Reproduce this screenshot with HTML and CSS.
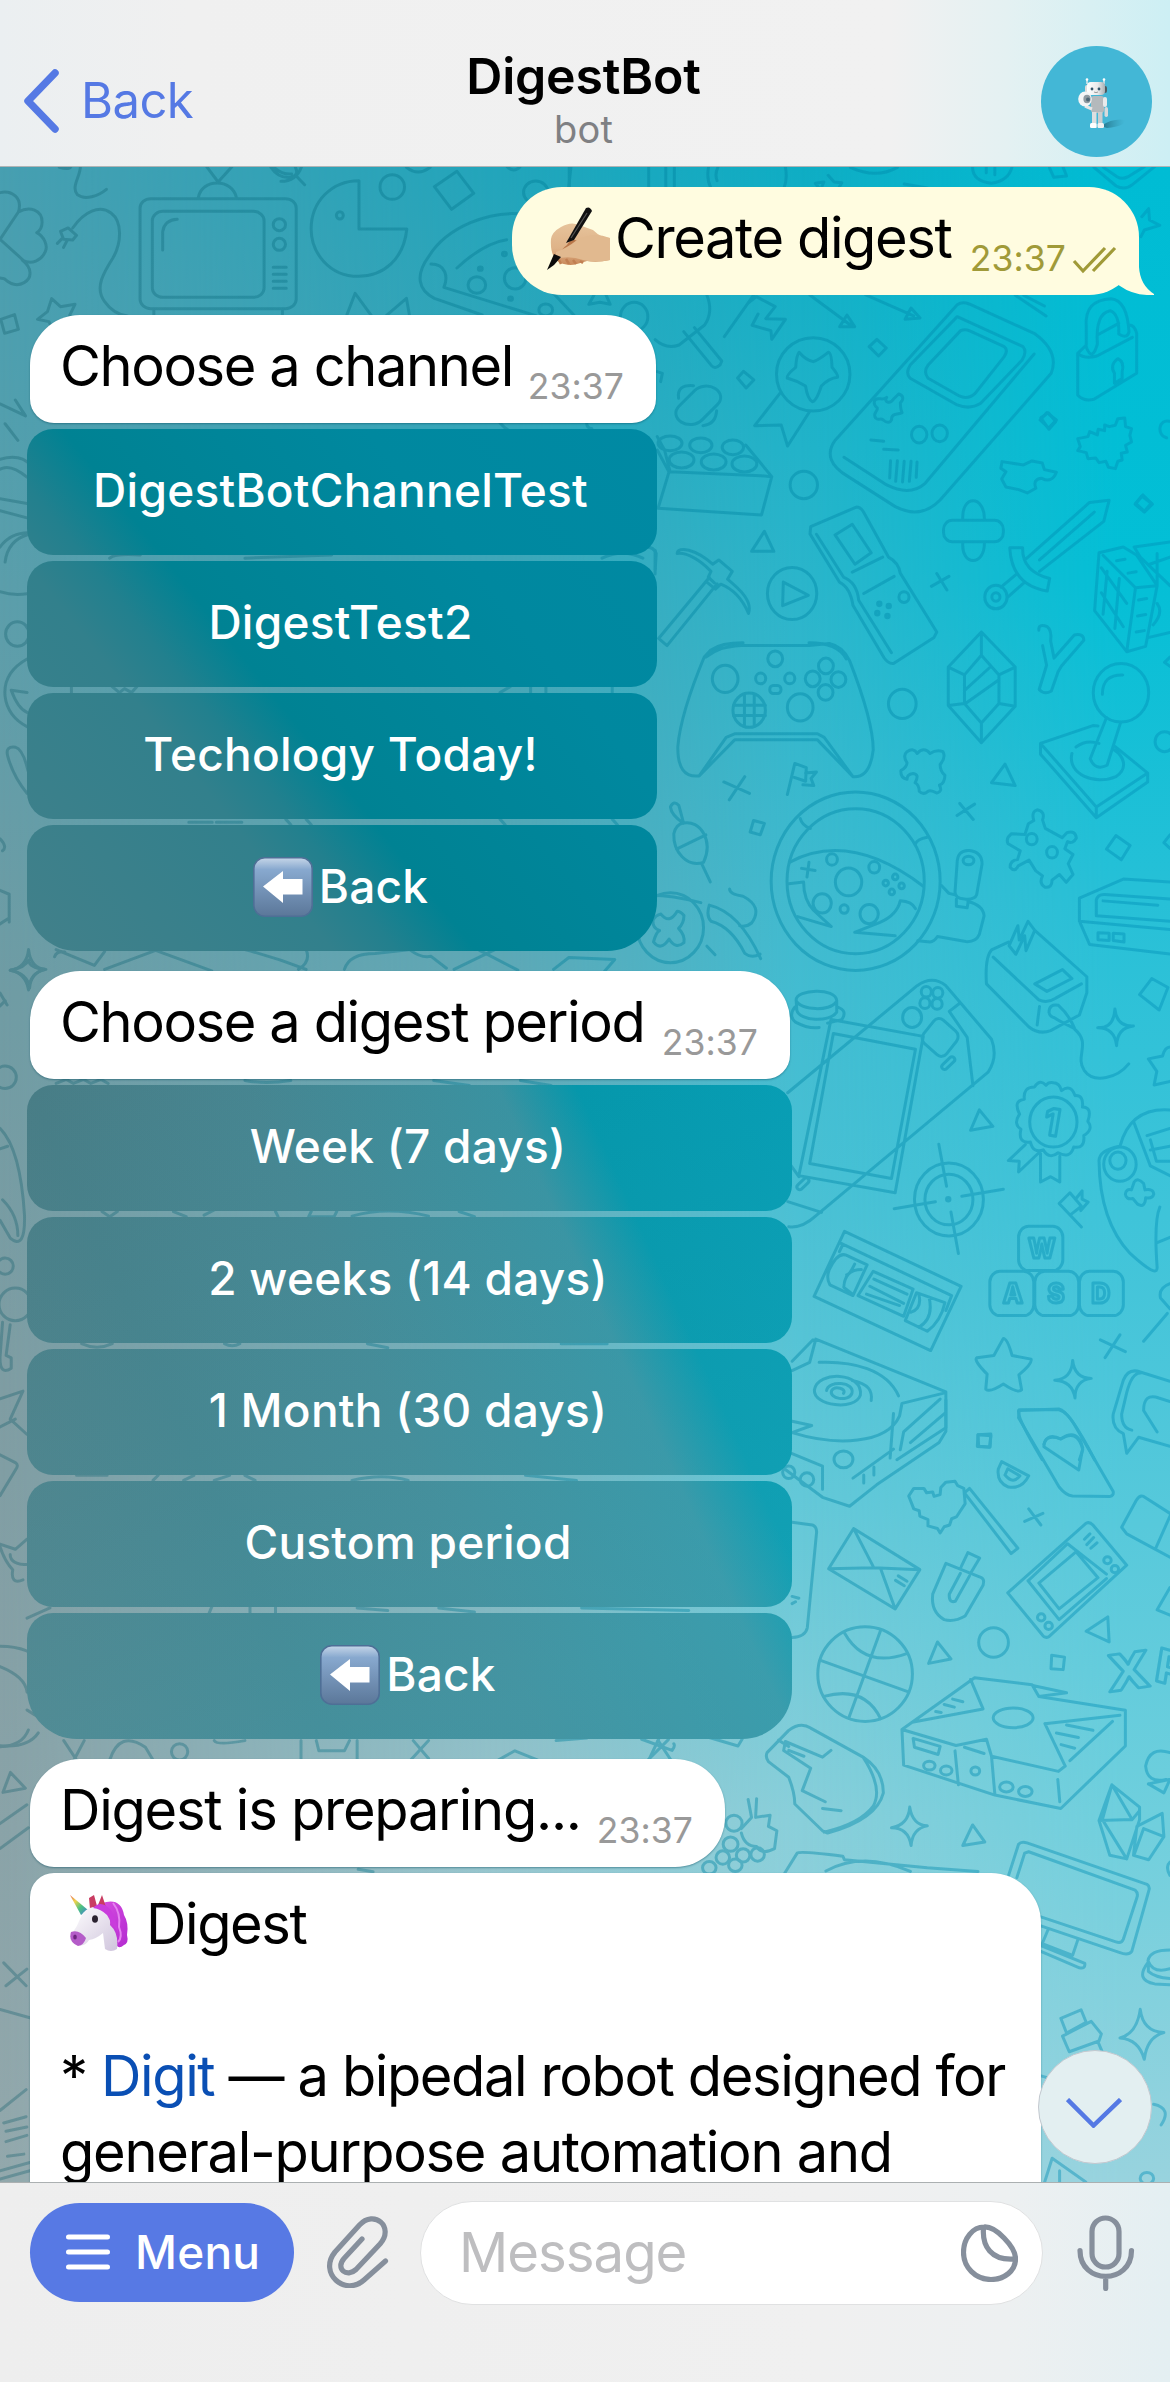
FILE: index.html
```html
<!DOCTYPE html>
<html lang="en">
<head>
<meta charset="utf-8">
<title>DigestBot</title>
<link rel="stylesheet" href="styles.css">
</head>
<body>
<div class="screen">
  <header class="header">
    <a class="back"><svg class="back-icon" width="38" height="68" viewBox="0 0 38 68"><path d="M33 6 6 34 33 62"/></svg><span>Back</span></a>
    <div class="heading"><h1 class="title">DigestBot</h1><p class="subtitle">bot</p></div>
    <svg class="avatar" width="111" height="111" viewBox="0 0 111 111">
      <defs>
        <linearGradient id="metal" x1="0" x2="1"><stop offset="0" stop-color="#fff"/><stop offset=".6" stop-color="#e8e9ea"/><stop offset="1" stop-color="#a9b0b4"/></linearGradient>
        <linearGradient id="cast" x1="0" x2="1"><stop offset="0" stop-color="#1c5f72" stop-opacity=".8"/><stop offset="1" stop-color="#2b8ca5" stop-opacity="0"/></linearGradient>
      </defs>
      <circle cx="55.500" cy="55.500" r="55.500" fill="#43b7d6"/>
      <path d="M60 80Q72 72 84 74 85 80 66 82Z" fill="url(#cast)"/>
      <path d="M46 38V34M63 38V34" stroke="#dfe8ea" stroke-width="1.500"/>
      <circle cx="46" cy="33.500" r="1.300" fill="#fff"/><circle cx="63" cy="33.500" r="1.300" fill="#fff"/>
      <rect x="44" y="39" width="4" height="8" rx="2" fill="#ddd"/><rect x="62" y="40" width="4" height="7" rx="2" fill="#4c5a60"/>
      <rect x="46" y="36" width="18" height="13" rx="4" fill="url(#metal)"/>
      <circle cx="51" cy="43" r="1.400" fill="#35566a"/><circle cx="58" cy="43" r="1.400" fill="#35566a"/>
      <path d="M53 46q2 1.200 4 0" stroke="#777" stroke-width=".7" fill="none"/>
      <rect x="50" y="50" width="13" height="17" rx="3" fill="#b4b9bc"/>
      <rect x="62" y="51" width="4" height="10" rx="2" fill="#e8eaeb"/><rect x="63.500" y="61" width="3.500" height="10" rx="1.700" fill="#d5dadc"/>
      <rect x="51" y="66" width="4.500" height="16" fill="#dcdfe0"/><rect x="57" y="66" width="4.500" height="16" fill="#c9cdcf"/>
      <rect x="49" y="77" width="6.500" height="5" rx="1.500" fill="#fff"/><rect x="56.500" y="77" width="6.500" height="5" rx="1.500" fill="#f2f2f2"/>
      <path d="M44 60l7 3" stroke="#e6e6e6" stroke-width="3"/>
      <ellipse cx="44" cy="53" rx="6.800" ry="7.500" fill="#f4f5f6"/><ellipse cx="46" cy="53" rx="3.600" ry="4.200" fill="#8f9aa1"/><circle cx="47" cy="53.500" r="2" fill="#4d6574"/>
    </svg>
  </header>

  <main class="chat">
    <svg class="wallpaper" width="1170" height="2015" viewBox="0 167 1170 2015">
      <defs>
        <linearGradient id="c0" gradientUnits="userSpaceOnUse" x1="0" y1="166" x2="0" y2="2182"><stop offset="0" stop-color="#479fb1"/><stop offset=".12" stop-color="#529fae"/><stop offset=".41" stop-color="#709ca4"/><stop offset=".61" stop-color="#7f9da3"/><stop offset="1" stop-color="#93a8ac"/></linearGradient>
        <linearGradient id="c1" gradientUnits="userSpaceOnUse" x1="0" y1="166" x2="0" y2="2182"><stop offset="0" stop-color="#22a5bb"/><stop offset=".13" stop-color="#33a6ba"/><stop offset=".27" stop-color="#4ba6b6"/><stop offset=".45" stop-color="#66a9b6"/><stop offset=".7" stop-color="#80b7c1"/><stop offset=".82" stop-color="#97c5cd"/><stop offset="1" stop-color="#9ccfd8"/></linearGradient>
        <linearGradient id="c2" gradientUnits="userSpaceOnUse" x1="0" y1="166" x2="0" y2="2182"><stop offset="0" stop-color="#0fadc4"/><stop offset=".14" stop-color="#22b3c9"/><stop offset=".36" stop-color="#40bacf"/><stop offset=".5" stop-color="#48c0d4"/><stop offset=".66" stop-color="#63c8d8"/><stop offset=".82" stop-color="#89cfda"/><stop offset="1" stop-color="#98d2dd"/></linearGradient>
        <linearGradient id="c3" gradientUnits="userSpaceOnUse" x1="0" y1="166" x2="0" y2="2182"><stop offset="0" stop-color="#00bcd4"/><stop offset=".2" stop-color="#03bfd6"/><stop offset=".36" stop-color="#26c0d7"/><stop offset=".6" stop-color="#4bc6da"/><stop offset=".82" stop-color="#6fcfdd"/><stop offset="1" stop-color="#98d3de"/></linearGradient>
        <linearGradient id="f1" gradientUnits="userSpaceOnUse" x1="0" x2="500" y1="0" y2="0"><stop offset="0" stop-color="#000"/><stop offset="1" stop-color="#fff"/></linearGradient>
        <linearGradient id="f2" gradientUnits="userSpaceOnUse" x1="500" x2="800" y1="0" y2="0"><stop offset="0" stop-color="#000"/><stop offset="1" stop-color="#fff"/></linearGradient>
        <linearGradient id="f3" gradientUnits="userSpaceOnUse" x1="800" x2="1120" y1="0" y2="0"><stop offset="0" stop-color="#000"/><stop offset="1" stop-color="#fff"/></linearGradient>
        <mask id="m1"><rect y="166" width="1170" height="2016" fill="url(#f1)"/></mask>
        <mask id="m2"><rect y="166" width="1170" height="2016" fill="url(#f2)"/></mask>
        <mask id="m3"><rect y="166" width="1170" height="2016" fill="url(#f3)"/></mask>
        <linearGradient id="inkTone" gradientUnits="userSpaceOnUse" x1="0" x2="1170" y1="0" y2="0"><stop offset="0" stop-color="#115d6b" stop-opacity=".33"/><stop offset=".5" stop-color="#00819c" stop-opacity=".42"/><stop offset="1" stop-color="#008fb8" stop-opacity=".42"/></linearGradient>
        <mask id="ink" maskUnits="userSpaceOnUse" x="0" y="166" width="1170" height="2016">
          <g class="doodles">
            <!-- top left: television, arcade, pizza -->
            <g transform="translate(0 160) scale(.3827 .3333)">
              <path d="M155 22q25 8 30-2M210 20c0 30-25 60-8 84 20 18 55 4 76-16"/>
              <path d="M0 98c30-8 60 15 48 58 30-20 62-5 62 30 0 15-4 25-14 32 20 12 30 40 22 58-10 25-35 40-60 24 28 25 25 55 5 68-18 12-35 6-52-12l-11-2M48 156 0 238 60 300"/>
              <path d="M190 204c30-50 70-70 100-45 30 25 28 90 5 135-25 45-48 90-22 130 15 25 35 40 60 44M158 214 178 204 200 226 190 240 166 238ZM162 236 150 250M176 240 166 262"/>
              <path d="M540 20 570 66 606 20M518 114c8-60 90-60 100 0"/>
              <rect x="366" y="116" width="408" height="330" rx="28"/><rect x="398" y="154" width="292" height="258" rx="28"/>
              <path d="M425 270v-55q5-35 38-37M402 448v20M738 448v20M714 322h34M714 343h34M714 364h34M714 385h34"/>
              <ellipse cx="730" cy="194" rx="16" ry="18"/><ellipse cx="730" cy="253" rx="16" ry="18"/>
              <path d="M708 22q20 34 52 30 22-5 12-30M716 22q20 22 46 20M734 64q40 0 54-44M776 50 796 74"/>
              <path d="M938 62V207h125c-8 90-60 142-127 142-75 0-123-70-123-142 0-80 52-145 125-145Z"/><ellipse cx="888" cy="166" rx="9" ry="11"/>
              <ellipse cx="1025" cy="81" rx="32" ry="37"/><path d="M1062 22q30 28 62 0M1135 80 1194 34 1238 100 1180 148ZM1325 20q18 20 34 0M1492 20 1486 82M906 466 928 400 970 466M1010 466 1062 415 1070 466"/>
              <ellipse cx="1400" cy="97" rx="32" ry="34"/>
              <path d="M1380 165c-100-20-215 40-260 125-35 55-28 100 15 125l125 50M1345 250M1126 312c40 0 45 40 34 70l240 85M1194 324q70-75 130-85M1430 380 1500 466"/>
              <ellipse cx="1246" cy="375" rx="23" ry="25"/><ellipse cx="1346" cy="355" rx="28" ry="32"/><ellipse cx="1426" cy="450" rx="18" ry="18"/><circle cx="1255" cy="326" r="5"/><circle cx="1318" cy="282" r="5"/><circle cx="1334" cy="416" r="5"/>
              <path d="M135 416 158 440 196 433 182 466 200 495 160 492 140 515 128 485 98 478 124 455ZM2 478 38 464 48 508 12 520Z"/>
            </g>
            <!-- top right: paddle, rosette, handheld, padlock -->
            <g transform="translate(500 160) scale(.4273 .3333)">
              <path d="M162 22v60M348 22v60M388 22v60M408 22v60M488 22q-5 35 5 60M510 22q-8 20-2 40M668 22q5 35-3 60"/>
              <path d="M768 46 782 66 800 68 790 90M750 90 738 70 758 66ZM946 72 1000 84M820 22q60 36 110 0M1106 22q0 42 44 48 40-8 48-48M1138 22v16M1158 22v22M1286 24l10 28 30-4-8-26M1390 22 1442 78q20 14 38-4l52-54M1412 22l32 28q12 10 26 0l38-30M1502 170 1518 146 1520 180 1544 196 1508 210 1500 230"/>
              <path d="M484 405q16 50-5 90l-60 60q-30 14-56-16M430 515l65 102q8 12 20-2l4-12-64-100"/><ellipse cx="314" cy="470" rx="32" ry="43"/>
              <path d="M525 530 594 405M580 430 600 410 644 440 622 476 668 478 636 538 634 512 590 496 604 462M220 405l-12 28 26-6 24 6-10-28M725 405 820 495M830 500 795 500 812 465ZM856 405 968 468M983 474 948 478 962 444Z"/>
              <ellipse cx="733" cy="643" rx="86" ry="110"/><path d="M733 605Q748 598 768 577 776 577 777 622 792 645 790 652 770 655 752 678 740 725 731 725 720 718 715 678 695 662 672 654 670 645 692 622 694 585 700 577 715 600 733 605Z"/>
              <path d="M655 700 596 797 658 795 673 858 724 756M864 560 882 538 904 564 886 588ZM556 654 570 634 594 660 576 684ZM1264 780 1280 758 1302 780 1284 804ZM1488 1030 1502 1008 1524 1030 1508 1054Z"/>
              <rect x="430" y="672" width="68" height="128" rx="34" transform="rotate(38 464 736)"/><path d="M418 715q-5-42 35-38M475 797q30-4 32-45"/>
              <path d="M368 830 385 870 398 935 610 947 636 950 612 1065 370 1045 395 938M368 870 395 935M575 855 636 950"/>
              <ellipse cx="398" cy="850" rx="28" ry="22"/><ellipse cx="470" cy="856" rx="26" ry="22"/><ellipse cx="545" cy="862" rx="25" ry="22"/><ellipse cx="425" cy="900" rx="29" ry="24"/><ellipse cx="500" cy="906" rx="29" ry="24"/><ellipse cx="572" cy="912" rx="29" ry="24"/>
              <ellipse cx="711" cy="975" rx="32" ry="41"/>
              <path d="M1070 434Q1082 424 1098 432L1250 520Q1310 575 1290 640L1030 1020Q985 1080 925 1040L815 950Q750 900 785 840ZM1250 582 995 970Q960 1010 905 975L805 892M1070 470 1224 560Q1234 575 1222 600L1125 730Q1100 750 1070 735L960 655Q948 640 960 615Z"/>
              <path d="M1078 512Q1088 506 1098 512L1180 560Q1190 570 1180 590L1112 700Q1095 720 1075 708L1002 655Q990 635 1002 615ZM868 840l30 4M898 868l34 2M914 902l-2 52M930 902l-4 62M946 904l-4 62M962 904l-4 60M976 906l-2 46"/>
              <ellipse cx="981" cy="824" rx="18" ry="25"/><ellipse cx="1029" cy="820" rx="18" ry="25"/>
              <path d="M905 712c-8 15 8 22 16 5l12-15c12 4 12 18 4 26 0 16 0 20 4 30-10 8-20-2-24 14 0 16-10 20-20 8-8-8-10 4-18-6-8-18 6-18 4-30-10-10-10-28 2-28 8 0 12 4 20-4Z"/>
              <path d="M1372 500q-5-80 58-84 38 5 42 100-5 22-24 6 2-60-20-70-35 8-30 100-12 55-26 10ZM1372 555 1352 580V705Q1365 725 1390 718L1490 640V520Q1485 495 1472 495M1398 525 1448 490M1352 580q15 18 45 8L1480 532M1438 670V640q-12-25 8-44 16 10 10 40v20Z"/>
              <path d="M1415 795V812L1400 808 1398 825 1380 815 1376 830 1352 836 1358 860 1352 872 1372 878 1376 896 1394 894 1402 908 1418 904 1424 922 1440 926 1446 904 1456 900 1454 880 1468 876 1464 856 1478 846 1474 826 1478 806 1464 800 1462 774 1446 776 1440 796 1426 800Z"/>
              <path d="M1206 406 1278 468M1226 406 1274 438M1175 905l50 10 20-12 24 6 5 20 28 8q-10 34-34 18-22 2-14 30l-20 14-20-10-30-8-10-24 10-22-12-10ZM368 635 380 640 376 665"/>
            </g>
            <!-- upper right: console pad, cassette handheld, sword, joystick -->
            <g transform="translate(640 400) scale(.338 .357)">
              <path d="M330 424 368 368 396 424ZM110 430c2-22 55-12 105 30l18-12 40 32-14 22c35 28 75 60 62 96-20-45-50-70-82-82l-16 14-28-22M110 430c30-4 70 20 100 50l-8 16 18 16M205 497 55 668 80 688 228 515"/>
              <circle cx="450" cy="542" r="73"/><path d="M424 510 498 547 422 576Z"/>
              <path d="M505 355 640 300Q655 300 665 320L735 440Q765 455 770 485L878 650 870 665 750 738Q735 740 722 722L630 575Q622 525 590 510L503 375ZM522 376l80 120q40 15 45 65L744 708M577 378 628 348 684 428 636 460ZM628 482 718 440M662 542 752 494"/>
              <circle cx="781" cy="552" r="15"/><circle cx="708" cy="571" r="5"/><circle cx="736" cy="577" r="5"/><circle cx="702" cy="597" r="5"/><circle cx="732" cy="605" r="5"/>
              <rect x="898" y="337" width="177" height="60" rx="26"/><path d="M955 335c-5-70 65-70 64 0M955 400c-5 66 65 66 64 0M862 522 914 494M878 486 908 532"/>
              <path d="M1094 414H1132Q1130 480 1212 500L1205 535Q1100 520 1094 414ZM1142 445 1330 287 1388 281 1372 340 1182 480M1182 448 1344 314M1114 488 1068 524M1136 512 1088 552"/><circle cx="1053" cy="552" r="33"/><circle cx="1053" cy="552" r="12"/>
              <path d="M1010 650 1110 748V858L1010 960 912 856V748ZM1010 650V715L1062 770V850L1010 905 960 850V770L1010 715M912 748 960 770M912 856 960 850M1110 748 1062 770M1110 858 1062 850M1010 905V960M962 812 1034 750M966 848 1060 785"/>
              <path d="M1180 645q-2-20 25-10 14 10 10 40l10 48 60-65q28-5 28 15l-66 72-10 16-20 54q-20 12-36-4l22-68-12-55"/>
              <path d="M1358 428 1430 412 1470 435 1530 520 1496 690 1440 705 1345 590ZM1370 435 1466 526 1530 520M1466 526 1440 705M1382 480 1370 600M1418 500 1405 640M1365 470 1440 570M1365 540 1430 635M1462 412 1568 398M1462 412 1480 440 1568 520M1530 430v90M1568 440l-60 20M1410 450l25-4M1444 485l24-4M1475 560l24-4M1472 605l24-4M1468 650l24-4M1530 570q20 25-12 60M1506 665l62-14"/>
              <circle cx="1423" cy="820" r="82"/><path d="M1368 824q0-55 60-54M1380 890 1332 1005q15 35 50 18l40-120M1355 913 1340 912 1185 962V992L1350 1170 1502 1070V1045L1405 970M1185 962 1350 1140 1502 1045M1350 1140v30M1290 972q30-22 68-10M1278 990c-15 60 70 90 130 65 40-25 20-60-5-75"/>
              <circle cx="776" cy="851" r="41"/>
              <path d="M210 700Q240 680 305 680M190 720 210 700 290 688H500L560 682Q600 690 620 730 690 900 690 980 680 1060 630 1055L525 952H280L175 1053Q110 1060 112 970 120 880 190 720ZM195 720Q240 688 300 688M500 680q85 0 110 45M175 1053 255 945 280 935H525L545 945 630 1055"/>
              <circle cx="252" cy="781" r="38"/><circle cx="400" cy="725" r="22"/><circle cx="357" cy="780" r="15"/><circle cx="443" cy="780" r="15"/><rect x="384" y="800" width="33" height="22" rx="10"/><circle cx="323" cy="869" r="48"/><circle cx="474" cy="861" r="38"/><circle cx="550" cy="745" r="22"/><circle cx="511" cy="781" r="22"/><circle cx="587" cy="783" r="22"/><circle cx="549" cy="819" r="22"/><path d="M309 824v90M338 824v90M277 855h94M277 884h94"/>
              <path d="M248 1070 324 1102M310 1055 264 1120M436 1105 458 1018 492 1030 490 1068 450 1055M490 1045 522 1042 506 1060 514 1080 482 1078M1040 1072 1080 1020 1110 1080ZM938 1164 990 1132M946 1130 986 1175M326 1210 336 1178 368 1186 356 1218ZM1380 1258 1408 1220 1450 1248 1424 1288ZM1186 50 1208 36 1230 60 1210 82ZM1465 292 1488 266 1516 292 1492 314ZM1568 720 1552 735 1568 746M1568 1218 1550 1240 1568 1256"/>
              <path d="M790 985q20-12 30 5 20-20 38 0 20-12 38-5 10 15-8 36 0 20 14 30 0 22-16 28 10 18-8 22-18-10-26-5-14 12-26 0 0-18-12-24 14-24-6-26-18 2-18 16-20-2-18-24 18-10 18-22-14-20 0-31Z"/>
              <path d="M128 1185q-35-22-38-45 10-20 25-4 6 20 14 50M128 1185c50-10 90 50 60 110-50 15-90-30-88-80 5-20 15-28 28-30ZM108 1258 195 1218M182 1298 208 1350"/>
              <circle cx="638" cy="1348" r="250" /><circle cx="638" cy="1348" r="203"/><path d="M474 1172q5 20 30 28M850 1225q-30 5-36 20M442 1295Q620 1205 838 1362M478 1312 518 1318M500 1295 494 1336M440 1355 484 1350q0 50 30 80l52 45-100-28M815 1425q-10-20-45-22-10 40-60 60l-75 28 120 10"/>
              <circle cx="568" cy="1287" r="16"/><circle cx="693" cy="1309" r="16"/><circle cx="617" cy="1350" r="39"/><circle cx="539" cy="1410" r="27"/><circle cx="604" cy="1426" r="12"/><circle cx="678" cy="1440" r="27"/><circle cx="755" cy="1336" r="8"/><circle cx="727" cy="1353" r="8"/><circle cx="774" cy="1361" r="8"/><circle cx="745" cy="1378" r="8"/>
              <path d="M938 1300q0-40 36-38 38 4 38 38l-16 86q-6 15-36 12-28-2-28-20ZM892 1360l22 22 18 4M936 1398v20l32 4 4-22M970 1405q45 10 48 40l-14 52q-10 22-40 20l-84-14q-10 15-22 15l-36-3"/><ellipse cx="972" cy="1290" rx="16" ry="12"/>
              <path d="M1165 1178q-8-25 10-30 25 5 16 28l8 24 50 26 14-14q25-8 28 15-10 18-26 10l-8 20 24 16-14 26 14 30-20 22-20-22-22 16q0 22-20 20-20-10-8-32l-20-14-20-30-32 16q-10 20-24 4 0-20 22-22l8-24-36-20q-8-15 10-28l40 2 10-30Z"/><circle cx="1159" cy="1230" r="16"/><circle cx="1219" cy="1267" r="16"/>
              <path d="M1568 1350 1430 1342 1300 1395V1460L1330 1525 1568 1552M1300 1460 1568 1483M1350 1445V1400Q1355 1384 1375 1385L1568 1398M1350 1445 1568 1460M1370 1403 1532 1415M1355 1492 1388 1494V1514L1355 1512ZM1400 1494 1432 1496V1518L1400 1514Z"/>
              <circle cx="1552" cy="957" r="28"/><path d="M1568 60c-35-10-40 40-10 46"/>
              <path d="M0 415Q38 405 48 430L45 475M0 1390q60-10 180 18M205 1415q90 20 152 150M205 1415q-10 30 5 45 60 15 100 90 20 15 45 2M265 1370q0 15 40 20 60 30 25 75-15 12-35 8M165 1460"/>
              <circle cx="90" cy="1478" r="98"/><path d="M62 1440q25 30 48-8 10 0 20 12 0 22-16 36 20 20 16 40-25 20-44-10-25 35-46 8 8-28 18-32-20-5-20-28 8-15 24-18ZM198 1530l24 24"/>
            </g>
            <!-- middle right: charger, handheld with screen, target, tape, key caps -->
            <g transform="translate(640 900) scale(.338 .357)">
              <path d="M1090 118 1040 140Q1020 160 1025 235L1150 355Q1180 378 1215 366L1300 322 1322 260V215L1168 85M1092 128 1118 72 1122 112 1148 60 1168 85 1142 142 1138 100 1112 152ZM1045 160 1180 280Q1205 290 1230 275L1306 235M1168 235 1250 195 1278 220 1204 256ZM1182 298 1175 350M1210 315q0-25 28-20 30 25 48 65-45-20-60-30-14-4-16-15M1286 362c50 40 0 75 28 115 30 40 100 20 132-18"/>
              <path d="M1405 305q5 50 55 48-48 5-50 55-6-50-56-50 48 2 51-53ZM1478 265 1514 220 1562 245 1536 308ZM1568 412q-15 0-22 25l-42 8 25 35-8 38 47-10M978 645 1004 588 1044 634Z"/>
              <path d="M462 280c0-30 118-36 120 2v32c-20 30-110 25-118-5ZM462 282c15 28 100 30 118 4M458 300q-20 25 2 42 40 20 70 15M585 300q30 10 12 35l-42 10"/>
              <path d="M565 335 838 382 755 820 470 772ZM572 374 815 418 744 780 502 738ZM437 540 820 240Q865 210 905 240L1040 390Q1060 440 1030 482L520 885Q480 920 440 915M945 290 915 312 968 385 985 520M437 845l100 30M440 735l30 40"/>
              <circle cx="847" cy="257" r="15"/><circle cx="881" cy="260" r="15"/><circle cx="843" cy="289" r="15"/><circle cx="879" cy="291" r="15"/><circle cx="805" cy="329" r="28"/><rect x="844" y="342" width="88" height="86" rx="20" transform="rotate(40 888 385)"/><rect x="904" y="434" width="16" height="46" rx="8" transform="rotate(48 912 457)"/><rect x="474" y="774" width="16" height="42" rx="8" transform="rotate(48 482 795)"/>
              <path d="M1223 512q18 0 24 22 28-20 40 14 26-2 22 32 30 0 16 40 18 22-12 40 4 38-30 32-10 34-46 16-26 20-44-8-30 10-38-22-38 5-28-36-24-14-4-42-20-38 14-42-4-34 30-34 16-24 34-5 8-10 22-7Z"/><circle cx="1223" cy="622" r="70"/>
              <path d="M1140 685 1090 730 1122 732 1120 762 1180 708M1185 710V790L1215 775 1242 790V718"/>
              <text x="1196" y="660" font-size="104" class="cap" transform="rotate(10 1223 622)">1</text>
              <circle cx="914" cy="839" r="102"/><circle cx="914" cy="839" r="71"/><circle cx="912" cy="838" r="5"/><path d="M884 684 907 802M942 990 920 874M752 865 874 845M1075 810 952 830"/>
              <path d="M1306 916 1240 850 1272 820 1306 858 1276 880M1290 836 1308 815V838L1326 846 1304 870"/>
              <rect x="1120" y="914" width="131" height="124" rx="30"/><rect x="1035" y="1040" width="130" height="124" rx="30"/><rect x="1168" y="1040" width="130" height="124" rx="30"/><rect x="1300" y="1040" width="130" height="124" rx="30"/>
              <text x="1149" y="1004" font-size="76" class="cap">W</text><text x="1074" y="1130" font-size="76" class="cap">A</text><text x="1206" y="1130" font-size="76" class="cap">S</text><text x="1336" y="1130" font-size="76" class="cap">D</text>
              <path d="M605 928 950 1082 860 1262 515 1110ZM595 962 922 1108 905 1150M600 965 590 985M672 1022 630 1108 562 1078Q550 1060 560 1035 585 985 610 995ZM690 1040 808 1090 780 1166 645 1108ZM692 1062 790 1104M680 1082 780 1130M670 1104 768 1136M818 1100 785 1178 850 1208Q890 1180 902 1128ZM655 1035q-50 0-52 50l24 18M635 1020q-15 30-24 30M825 1105q10 40-24 50M855 1112q15 60-30 85"/>
              <path d="M1075 1228q12 0 26 48l56 10q5 12-36 44l8 42q-10 12-54-16-40 25-52 14l4-42q-42-40-30-46l50-6ZM1280 1290q6 50 55 50-48 6-48 55-8-48-60-50 50-3 53-55ZM1362 1232 1436 1265M1420 1218 1376 1282M1000 1498 1038 1496 1036 1532 1002 1530Z"/>
              <path d="M1568 588Q1450 580 1420 690M1420 690Q1360 700 1358 730 1360 900 1450 990 1530 1060 1530 1030 1520 900 1538 860M1462 625 1510 745 1568 772M1500 660 1568 640M1510 672 1528 732H1568M1510 700 1568 690M1530 960l38-15M1568 1075q-35 12-28 40l28 30M1560 1158 1490 1236"/>
              <circle cx="1420" cy="740" r="48"/><circle cx="1414" cy="730" r="24"/><path d="M1462 790q10-14 28 4l4 18q25-4 26 12-4 14-24 10-2 30-24 18l-14-16q-20 4-22-12 2-16 18-12Z"/>
              <path d="M450 1318 502 1295 520 1230 905 1378V1478L760 1568M450 1292 512 1232M530 1295c100-4 200 20 235 94M905 1380 775 1410 768 1445C730 1525 580 1530 450 1492L508 1472 450 1460M888 1398 780 1490 770 1540M905 1435 800 1520M516 1372c10-55 145-50 136 15-15 45-140 30-136-15ZM552 1374c5-30 85-25 75 8-10 25-70 15-60-8 10-15 45-5 35 8M628 1346c50 10 60 30 56 56"/>
              <path d="M1120 1430 1240 1426Q1270 1430 1345 1568M1120 1430Q1115 1450 1190 1568M1195 1525q10-35 50-15 50-30 65 30l-10 28M1568 1348 1480 1322Q1445 1310 1430 1345L1400 1440Q1395 1480 1430 1495L1440 1550 1475 1505 1568 1530M1480 1325Q1455 1325 1440 1380L1425 1440Q1425 1480 1455 1485M1530 1490 1490 1430q0-50 45-35l33 10"/>
            </g>
            <!-- lower right: envelope, trowel, console, monitor -->
            <g transform="translate(640 1400) scale(.338 .4464)">
              <path d="M450 120 540 148V200M420 150 540 218 620 238 700 190 885 95 905 70V0M630 175 750 110M692 150v18M662 168v18M750 30 740 130"/><ellipse cx="602" cy="133" rx="28" ry="19"/><ellipse cx="440" cy="162" rx="18" ry="14"/><ellipse cx="494" cy="178" rx="20" ry="15"/>
              <path d="M1122 22H1240Q1265 28 1285 55L1400 205Q1402 215 1390 216L1280 215Q1260 214 1240 195L1120 40ZM1195 105q0-30 50-18 50-25 65 20l-12 50ZM1000 78 1038 80 1034 106 998 104ZM1060 155 1070 138 1150 170Q1130 200 1090 195 1055 185 1060 155ZM1080 168l8-14 36 16q-20 20-44-2"/>
              <path d="M795 215 810 198H840L848 208 866 206 870 216 888 212 890 196 905 184 932 182 940 192 958 198 962 232 936 262 922 266 916 280 900 284 888 298 880 288 852 282V268L828 260 826 248 810 244ZM975 198 1118 332 1098 344 960 208ZM1138 272 1192 254M1150 244 1186 280"/>
              <path d="M632 288 828 380 755 468 558 378ZM632 288 692 376 828 380M692 376 558 378M712 378 755 468M764 394l26 12M756 404l26 12"/>
              <path d="M905 366 1010 398Q1020 402 1015 415L962 484Q930 498 900 492 860 475 866 435ZM950 374 970 342 1005 354 978 388M948 388 915 435q-2 20 18 16L975 394"/>
              <path d="M1088 432 1320 276Q1330 272 1340 280L1440 370 1210 530Q1198 535 1190 526ZM1148 405 1265 322 1380 390M1148 405 1240 492 1380 400M1180 410 1290 340 1355 398 1240 468ZM1315 312l16-12M1322 324l20-16M1334 332l18-12"/><ellipse cx="1383" cy="359" rx="11" ry="8"/><ellipse cx="1405" cy="379" rx="11" ry="8"/><ellipse cx="1187" cy="487" rx="11" ry="8"/><ellipse cx="1209" cy="506" rx="11" ry="8"/>
              <path d="M1568 254 1490 216Q1478 212 1468 225L1425 285 1440 300 1568 352M1568 260 1526 332M1568 420l-38 50 38 12M1320 518 1384 486 1388 542ZM854 590 880 542 920 580ZM1218 572 1256 576 1252 604 1216 602ZM955 998 984 952 1020 990Z"/>
              <ellipse cx="1046" cy="543" rx="44" ry="33"/>
              <ellipse cx="666" cy="614" rx="140" ry="106"/><path d="M712 516 618 712M536 584 794 654M605 522q60 80 184 46M544 664q120-25 168 50"/>
              <text font-size="112" class="cap" transform="translate(1386 654) rotate(-6) scale(1.500 1)">X</text><text font-size="104" class="cap" transform="translate(1520 628) rotate(12) scale(1.400 1)">P</text>
              <path d="M775 738 990 622 1160 638 1180 664 1436 695V775L1245 915 1050 885 780 818ZM805 722 1015 692 978 626M1165 640 1262 656M1198 725 1420 706M1198 725 1258 820M1398 720 1272 808M1180 664 1262 656M775 738 935 774 1025 760 1040 798 1238 832 1258 820M1040 798 1050 885M932 786 942 862M1236 850 1242 900M808 758 888 776 882 794 812 778ZM960 778 1018 792M875 698l16 2M900 682l30 6M925 670l30 6M1232 746l65 10M1246 772l40 8M1262 728l78 12"/>
              <ellipse cx="1104" cy="712" rx="59" ry="22"/><ellipse cx="856" cy="819" rx="17" ry="10"/><ellipse cx="906" cy="830" rx="17" ry="10"/><ellipse cx="992" cy="831" rx="13" ry="9"/><ellipse cx="1084" cy="867" rx="20" ry="11"/><ellipse cx="1140" cy="877" rx="20" ry="11"/>
              <path d="M450 274 510 280Q525 285 522 300L495 510Q490 530 450 532M450 440l20 4M450 456l10-4"/>
              <path d="M376 790 440 740Q475 720 505 735L660 800Q720 830 720 880 700 940 555 970L540 965 458 905Q458 880 440 845L380 810Q370 800 376 790ZM660 800Q720 870 690 910 650 950 545 968M430 765 425 785 505 825 480 875 548 900M430 765 540 800 565 785M440 785 485 798M540 915 595 920M410 762l30 14"/>
              <path d="M798 912q8 40 52 42-44 6-48 44-8-40-58-40 50-6 54-46ZM320 895 330 935 300 960M345 893 342 935 385 930 380 955 405 965 398 1005Q360 1020 345 1000 310 1000 300 970"/>
              <ellipse cx="278" cy="948" rx="24" ry="18"/><ellipse cx="268" cy="995" rx="22" ry="16"/><ellipse cx="305" cy="1020" rx="20" ry="15"/><ellipse cx="348" cy="1018" rx="20" ry="15"/><ellipse cx="245" cy="1025" rx="20" ry="15"/><ellipse cx="282" cy="1042" rx="20" ry="14"/><ellipse cx="205" cy="1048" rx="20" ry="14"/>
              <path d="M428 1060 465 1015Q475 1010 600 1022L605 1030 850 1048 1000 1056M550 1055Q660 1010 800 1056M30 800 55 760M5 760 95 785Q105 775 100 770M200 755 290 775 302 760"/>
              <path d="M1090 1066 1120 995Q1128 988 1145 992L1500 1085Q1510 1090 1505 1100L1455 1235Q1445 1245 1420 1238L1186 1178M1115 1070 1138 1015 1150 1012 1465 1098Q1475 1105 1470 1115L1430 1208Q1425 1218 1408 1214L1186 1158M1208 1185 1190 1218 1280 1244 1295 1210M1186 1235 1300 1272Q1318 1275 1316 1262L1186 1222"/>
              <path d="M1396 862 1478 912V940L1440 1028 1390 1020 1358 942ZM1396 862 1368 940 1440 1028M1396 862 1456 940 1358 942M1456 940 1478 920M1470 955 1545 926 1550 978 1505 1030 1460 1020ZM1490 960 1550 978M1490 960 1462 1018"/>
              <path d="M1568 790q-60-15-72 30 5 40 60 30M1504 860l62-10M1504 860 1550 880 1568 850M1568 1232q-60 0-65 24 15 30 65 18M1503 1260q-40 40 20 48l45 2M1504 1262v18q20 14 64 16M1568 1035q-15 10 0 30"/>
              <path d="M1245 1385 1305 1366 1320 1394 1262 1418ZM1250 1425 1335 1392 1365 1420 1358 1436 1270 1460ZM1355 1438 1372 1468M1480 1365q8 50 70 52-50 10-58 60-16-45-72-48 50-10 60-64ZM1186 1514 1205 1518"/>
            </g>
            <!-- left margin and the slits between keys -->
            <g transform="translate(0 400) scale(.5102 .3954)">
              <path d="M0 10 50 40 30 0M10 60 35 102M0 150q40-15 60 15M0 175q20-15 53 20M0 250 53 262M0 280l53 18M10 410q5-55 45-70M0 372q20-35 55-36M0 485q25 10 53 5"/>
              <ellipse cx="34" cy="592" rx="23" ry="31"/><path d="M53 655Q5 690 10 750 15 800 53 826M22 734 53 740M22 734Q35 780 53 790M15 900q-5-25 15-22 15 5 25 60M15 900q10 50 38 95M0 1110q15 20 5 30M0 1240 18 1250V1320M0 1325 18 1310M56 1390q4 48 34 50-32 8-34 52-6-44-36-50 32-6 36-52ZM0 1500l14 30"/>
              <path d="M980 58q20 30 50 30M1150 58q0 14 10 14M215 400q10-12 60-8M480 400 650 392M1180 400q40-25 80 0M1284 380v60M140 725v15M220 725l14 15 10-10 14 10 10-15M980 740l20-15M1200 725v15M1040 725v15M1070 725v15M370 1068h46M424 1068h50M560 1060l10 14M600 1060l10 14M980 1060l10 14M1200 1060l10 14M110 1390l75 40 20-35M107 1408q4-15 20-12M205 1440l100-48 110 52M480 1390q60 20 120 50M600 1390q10 30-15 50M675 1440q10-40 60-40l70-10M805 1392q20 20 40 15l30 30M890 1440l80-50M940 1392l75 50M1085 1440l30-30 90 5-20 30"/>
            </g>
            <g transform="translate(0 960) scale(.5102)">
              <path d="M56 0Q58 16 88 18 60 25 58 55 54 26 20 20 50 15 56 0M0 90 10 80M0 330Q40 370 48 500 50 570 20 545L0 510M0 370 15 365M5 470Q35 500 35 540"/>
              <circle cx="10" cy="230" r="22"/><circle cx="10" cy="600" r="16"/><circle cx="30" cy="675" r="32"/>
              <path d="M5 710 0 780Q0 815 22 800V780L12 775 20 715M0 860 45 845 20 900 53 930M0 915 30 900M0 970 30 985Q38 990 30 1000L0 1050M0 1145l30 10 23-20M20 1165q0 20 35 20M0 1150q10 30 25 45-5 30 20 20M53 1290l45-20M0 1345q60 0 85 35M0 1385q50 20 53 50M53 1470Q80 1490 110 1490M0 1540q55 5 75-25"/>
              <path d="M110 242l20-8 14 8 20-8 14 8 20-8 14 8M480 236q40 8 90 0M850 236l70 10M1020 236l60 10M200 493l15 10 15-10M340 493l25 10M400 500l20-10M540 493l5 10M610 493l-5 10 50 0 5-10M690 502q70-20 150 0M900 493l30 10M160 752q30 14 60 0M440 752q15 8 30 0M720 752l40 8M1100 752h90M150 1010h60M300 1020l10-10M360 1020l20-10M420 1020l30-10M480 1010l20 10M690 1020q60-14 110 0M1030 1010l100 10M410 1280l5-12M490 1280v-12M540 1280v-12M700 1270l60 5M860 1270l70 8M1140 1270 1350 1275"/>
              <path d="M125 1530 150 1568M165 1530 145 1568M215 1568q20-60 70-25l15 25M420 1530q5 10 60 0M590 1530v38M700 1530v38M620 1530l5 20h50l10-20M810 1530l30 35M840 1530l-35 38M1090 1530l60-5M1270 1568l40-40M1290 1530l25 38"/><circle cx="352" cy="1552" r="16"/>
            </g>
            <g transform="translate(0 1730) scale(.7462 .4158)">
              <path d="M0 40q30-2 38-40M4 150 14 102 34 140ZM0 225 36 180M0 285l38-50M5 560l30 55M36 575 8 615M0 672l40 20M0 915l35-50M5 945l30-15M8 965l28-10M8 990l28-15M10 1025l22-5M0 1060l40-20M0 1080l40-20M480 335l20 6M660 80l30-30 30 22"/>
              <path d="M1410 1030 1400 1087M1410 1030 1455 1087M1420 1060v27M1546 900q25 10 10 50"/><ellipse cx="1537" cy="1078" rx="9" ry="14"/>
            </g>
          </g>
        </mask>
      </defs>
      <rect y="166" width="1170" height="2016" fill="url(#c0)"/>
      <rect y="166" width="1170" height="2016" fill="url(#c1)" mask="url(#m1)"/>
      <rect y="166" width="1170" height="2016" fill="url(#c2)" mask="url(#m2)"/>
      <rect y="166" width="1170" height="2016" fill="url(#c3)" mask="url(#m3)"/>
      <rect y="166" width="1170" height="2016" fill="url(#inkTone)" mask="url(#ink)"/>
    </svg>

    <div class="messages">
      <article class="bubble out">
        <svg class="emoji hand" width="66" height="64" viewBox="0 0 66 64">
          <defs><linearGradient id="skin" x1="0" x2="0" y1="0" y2="1"><stop offset="0" stop-color="#e6c39b"/><stop offset=".6" stop-color="#dfb388"/><stop offset="1" stop-color="#c98a5c"/></linearGradient></defs>
          <path d="M4 32Q5 25 14 20 24 14 32 18L46 23Q54 31 63 31V53Q50 56 40 54L30 57Q18 60 9 53 3 46 4 32Z" fill="url(#skin)"/>
          <path d="M20 38Q24 31 31 34 26 42 12 49 14 42 20 38Z" fill="#b9774a"/>
          <path d="M9 45Q20 41 30 33 46 24 63 31V53Q48 56 36 53 22 48 9 52Z" fill="#e1b98f"/>
          <path d="M12 53l2 4M19 52l3 5M26 53l3 4M33 54l3 2" stroke="#c17f52" stroke-width="2.500"/>
          <path d="M39 1Q43 -1 45 4L27 33 19 36Z" fill="#111"/><path d="M7 47 14 50 7 58 0 63Z" fill="#0b0b0b"/><path d="M40 6 24 31" stroke="#555" stroke-width="1.200"/>
        </svg>
        <span class="text">Create digest</span>
        <span class="time">23:37</span>
        <svg class="checks" width="46" height="28" viewBox="0 0 46 28"><path d="M2 15 11 25 33 2M21 25 43 2"/></svg>
        <svg class="tail" width="50" height="50" viewBox="0 0 50 50"><path d="M35 0V22Q36 40 50 49V50Q30 51 16 41L0 30Z"/></svg>
      </article>

      <section class="with-keys keys-one">
        <article class="bubble joined"><span class="text">Choose a channel</span><span class="time">23:37</span></article>
        <div class="keyboard">
          <button class="key">DigestBotChannelTest</button>
          <button class="key">DigestTest2</button>
          <button class="key">Techology Today!</button>
          <button class="key"><svg class="arrow" width="60" height="60" viewBox="0 0 60 60"><defs><linearGradient id="tile" x1="0" x2="0" y1="0" y2="1"><stop offset="0" stop-color="#c6d6e8"/><stop offset=".2" stop-color="#88a9cf"/><stop offset="1" stop-color="#5b7799"/></linearGradient></defs><rect x=".8" y=".8" width="58.400" height="58.400" rx="11" fill="url(#tile)" stroke="#4e6f96" stroke-width="1.600"/><path d="M10 29.500 30 14V22H49.500V37.500H30V46Z" fill="#fff"/></svg>Back</button>
        </div>
      </section>

      <section class="with-keys keys-two">
        <article class="bubble joined"><span class="text">Choose a digest period</span><span class="time">23:37</span></article>
        <div class="keyboard">
          <button class="key">Week (7 days)</button>
          <button class="key">2 weeks (14 days)</button>
          <button class="key">1 Month (30 days)</button>
          <button class="key">Custom period</button>
          <button class="key"><svg class="arrow" width="60" height="60" viewBox="0 0 60 60"><rect x=".8" y=".8" width="58.400" height="58.400" rx="11" fill="url(#tile)" stroke="#4e6f96" stroke-width="1.600"/><path d="M10 29.500 30 14V22H49.500V37.500H30V46Z" fill="#fff"/></svg>Back</button>
        </div>
      </section>

      <article class="bubble preparing"><span class="text">Digest is preparing...</span><span class="time">23:37</span></article>
      <article class="bubble digest">
        <p class="text"><svg class="emoji unicorn" width="60" height="56" viewBox="0 0 60 56">
          <defs>
            <linearGradient id="horn" x1="0" y1="0" x2="1" y2="1"><stop offset="0" stop-color="#e56a52"/><stop offset=".3" stop-color="#f0d34c"/><stop offset=".6" stop-color="#4cc281"/><stop offset="1" stop-color="#4179d8"/></linearGradient>
            <linearGradient id="mane" x1="0" y1="0" x2="1" y2="1"><stop offset="0" stop-color="#d64ce0"/><stop offset="1" stop-color="#b32bd0"/></linearGradient>
            <linearGradient id="coat" x1="0" y1="0" x2="1" y2="1"><stop offset="0" stop-color="#fff"/><stop offset="1" stop-color="#cfc4dc"/></linearGradient>
          </defs>
          <path d="M33 8Q52 2 55 20 60 28 58 40 60 48 55 50 48 56 46 46L38 26Z" fill="url(#mane)"/>
          <path d="M1 0 19 15 12 20Z" fill="url(#horn)"/>
          <path d="M20 3 25 0 28 11 21 14ZM29 10 33 0 37 12Z" fill="#c93c62"/>
          <path d="M14 18Q22 9 34 13 42 18 41 30 50 38 48 54 42 58 36 54L34 38Q27 44 20 45 16 52 9 50L2 46Q0 42 4 37 8 32 11 24Z" fill="url(#coat)"/>
          <path d="M2 37Q10 34 17 43 15 50 9 51-1 47 2 37Z" fill="#b45cc8"/><ellipse cx="6" cy="42" rx="1.800" ry="2.500" fill="#6e2580"/>
          <ellipse cx="26" cy="24" rx="3" ry="3.800" fill="#2b2330"/>
          <path d="M24 13Q32 4 42 15 48 26 49 37 43 30 38 20 32 14 24 13Z" fill="#c93cdc"/><path d="M44 8Q52 18 50 32 54 42 49 47" fill="none" stroke="#e583f0" stroke-width="2"/>
        </svg>Digest</p>
        <p class="text">&nbsp;</p>
        <p class="text">* <a class="link">Digit</a> — a bipedal robot designed for</p>
        <p class="text loose">general-purpose automation and</p>
      </article>
    </div>
    <button class="to-bottom" aria-label="Scroll down"><svg width="56" height="30" viewBox="0 0 56 30"><path d="M1.500 1.500 27.500 27.500 54.500 1.500"/></svg></button>
  </main>

  <footer class="composer">
    <button class="menu"><svg width="44" height="36" viewBox="0 0 44 36"><path d="M2.500 3H41.500M2.500 18H41.500M2.500 33H41.500"/></svg>Menu</button>
    <svg class="icon clip" width="64" height="72" viewBox="0 0 64 72"><path d="M36 23 18 42.500C9 53 21 62 30 53.500L54 28C69 11 48-7 33.500 9L9 36C-8 57 19 81 38 64L59.500 45"/></svg>
    <div class="field"><span>Message</span>
      <svg class="icon sticker" width="57" height="58" viewBox="0 0 57 58"><path d="M23 3C35 2 54 23 54.500 34 55 47 43 55.500 30 55.500 14 55.500 2.500 43 2.500 28.500 2.500 14 12 3 23 3ZM22.500 4C21 22 30 37 54 35"/></svg>
    </div>
    <svg class="icon mic" width="58" height="76" viewBox="0 0 58 76"><rect x="15" y="3" width="27" height="49" rx="13.500"/><path d="M3 35.500C3 70 54.500 70 54.500 35.500M28.700 62V73.500"/></svg>
  </footer>
</div>
</body>
</html>
```
FILE: styles.css
```css
* { box-sizing: border-box; }
body { margin: 0; font-family: Inter, "Liberation Sans", sans-serif; color: #000; }
h1, p { margin: 0; font-weight: 400; }
button { border: 0; padding: 0; margin: 0; font: inherit; color: inherit; background: none; }

.screen { display: grid; grid-template-rows: 167px 2015px 200px; width: 1170px; height: 2382px; overflow: hidden; }

.header {
  display: grid; grid-template-columns: 1fr auto 1fr; align-items: start;
  padding: 46px 18px 0;
  background: linear-gradient(90deg, #ebeff1 0, #f0f0f0 16%, #f1f1f1 76%, #e4f1f2 86%, #cdeff4 100%);
  border-bottom: 1px solid #b0b4b5;
}
.back { display: flex; align-items: center; gap: 21px; margin: 20px 0 0 4px; color: #5579e4; font-size: 49px; line-height: 70px; letter-spacing: -.6px; }
.back-icon path { fill: none; stroke: #5579e4; stroke-width: 7.500; stroke-linecap: round; stroke-linejoin: round; }
.heading { text-align: center; margin-right: 3px; }
.title { font-size: 50px; line-height: 60px; font-weight: 600; letter-spacing: -.2px; }
.subtitle { font-size: 38px; line-height: 46px; color: #7f8083; letter-spacing: .2px; }
.avatar { justify-self: end; }

.chat { position: relative; overflow: hidden; }
.wallpaper { position: absolute; inset: 0; display: block; }
.doodles { fill: none; stroke: #fff; stroke-width: 3; stroke-linecap: round; stroke-linejoin: round; }
.doodles * { vector-effect: non-scaling-stroke; }
.cap { font-family: Inter, "Liberation Sans", sans-serif; font-weight: 800; }

.messages { position: relative; display: flex; flex-direction: column; align-items: flex-start; padding: 20px 31px 0 30px; }
.bubble {
  display: flex; height: 108px; padding: 13px 32px 0 30px; border-radius: 50px; background: #fff;
  box-shadow: 0 1px 2px rgba(0, 70, 90, .45);
}
.bubble.joined { border-radius: 50px 50px 24px 24px; }
.text { font-size: 56px; line-height: 76px; letter-spacing: -1.400px; white-space: nowrap; }
.text.loose, .preparing .text { letter-spacing: -1.250px; }
.time { margin-left: auto; padding-top: 33px; font-size: 35.500px; line-height: 52px; color: #999; letter-spacing: .1px; }

.out { position: relative; width: 627px; margin: 0 0 20px auto; padding: 13px 21px 0 35px; background: #fffce0; box-shadow: none; }
.out .hand { margin: 7px 2px 0 0; flex: none; }
.out .time { color: #a09a38; }
.checks { margin: 46px 0 0 6px; flex: none; }
.checks path { fill: none; stroke: #a09a38; stroke-width: 3.200; }
.tail { position: absolute; right: -15px; bottom: 0; }
.tail path { fill: #fffce0; }

.with-keys { margin-bottom: 20px; }
.with-keys .bubble { margin-bottom: 6px; }
.keyboard { display: grid; gap: 6px; margin-left: -3px; }
.keys-one .bubble { width: 626px; }
.keys-one .keyboard { width: 630px; }
.keys-two .bubble { width: 760px; }
.keys-two .keyboard { width: 765px; }
.key {
  display: flex; align-items: center; justify-content: center; height: 126px; padding: 0 3px 4px 0; border-radius: 26px;
  color: #fff; font-size: 46px; line-height: 60px; font-weight: 500; letter-spacing: .25px;
}
.key:last-child { border-radius: 26px 26px 50px 50px; }
.keys-one .key { background: linear-gradient(51.600deg, #42808a 911px, #32808c 1150px, #22808e 1200px, #008293 1262px, #00889f 1500px, #008aa4 1728px) fixed; }
.keys-two .key {
  background:
    linear-gradient(155deg, rgba(60, 190, 210, 0) 1000px, rgba(60, 190, 210, .3) 1760px) fixed,
    linear-gradient(65.500deg, #587c82 292px, #487d86 563px, #47838e 760px, #3a8e9c 990px, #0093a7 1062px, #0099b0 1258px) fixed;
}
.arrow { margin: 0 6px 0 0; position: relative; top: 1px; }

.preparing { width: 695px; margin-bottom: 6px; border-radius: 50px 50px 50px 24px; }
.digest { display: block; width: 1011px; height: 380px; border-radius: 24px 50px 0 0; }
.unicorn { margin: 0 17px -7px 9px; }
.link { color: #0a4fb4; }

.to-bottom {
  position: absolute; left: 1038px; top: 1883px; width: 114px; height: 114px; border-radius: 50%;
  display: flex; align-items: center; justify-content: center; padding-top: 12px;
  background: #e3eff1; border: 1.500px solid #c3c8cf;
}
.to-bottom svg { margin-right: 3px; }
.to-bottom path { fill: none; stroke: #5579e4; stroke-width: 4.500; }

.composer {
  display: flex; align-items: flex-start; padding: 18px 0 0 30px;
  background: linear-gradient(90deg, #eeeeee 0, #f0f0f0 70%, #edf0f1 86%, #e4eff2 100%);
  border-top: 1px solid #abb0b1;
}
.menu {
  display: flex; align-items: center; gap: 25px; width: 264px; height: 99px; margin-top: 2px; padding: 0 0 2px 36px;
  border-radius: 50px; background: #5779e4; color: #fff; font-size: 46px; font-weight: 500; line-height: 60px; letter-spacing: .2px;
}
.menu path { stroke: #fff; stroke-width: 5; stroke-linecap: round; }
.icon { fill: none; stroke: #868f9c; stroke-width: 5.200; stroke-linecap: round; stroke-linejoin: round; flex: none; }
.clip { margin: 15px 0 0 32px; }
.field {
  display: flex; align-items: center; justify-content: space-between; width: 623px; height: 104px; margin-left: 30px; padding: 0 24px 0 38px;
  border: 1px solid #e0e1e2; border-radius: 52px; background: #fff; color: #bebec0; font-size: 54.500px; line-height: 70px; letter-spacing: -1px;
}
.field span { padding-bottom: 3px; }
.mic { margin: 14px 0 0 34px; }
```
